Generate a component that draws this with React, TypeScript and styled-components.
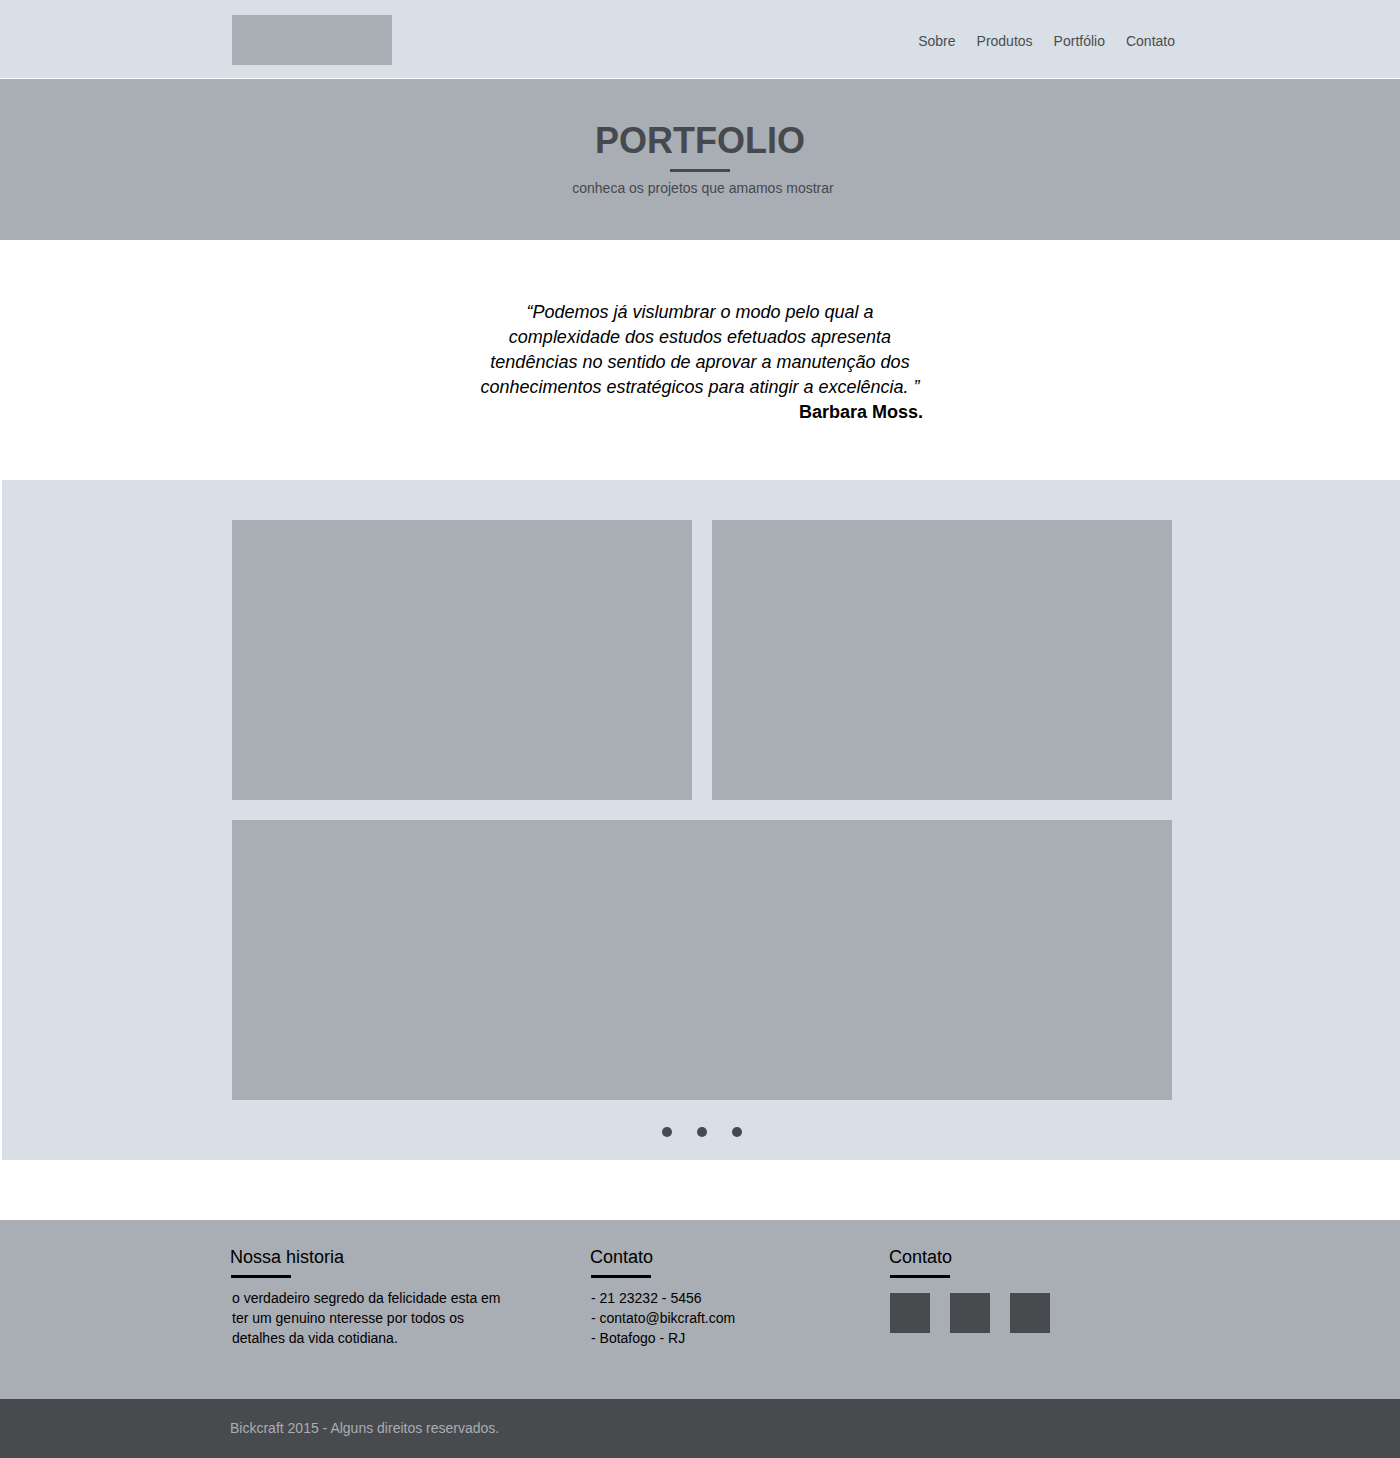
import styled, { createGlobalStyle } from "styled-components";

const GlobalStyle = createGlobalStyle`
    * { box-sizing: border-box; }
    body {
        margin: 0;
        background: #ffffff;
        font-family: "Liberation Sans", Arial, sans-serif;
    }
    ul { list-style: none; margin: 0; padding: 0; }
    a { text-decoration: none; color: inherit; }
    p, h1, h2, h3 { margin: 0; }
`;

const Container = styled.div`
    width: 940px;
    margin: 0 auto;
`;

const Header = styled.header`
    height: 79px;
    background: #d9dfe6;
    border-bottom: 1px solid #ffffff;
`;
const HeaderInner = styled(Container)`
    display: flex;
    justify-content: space-between;
    align-items: flex-start;
`;
const Logo = styled.div`
    width: 160px;
    height: 50px;
    margin: 15px 0 0 2px;
    background: #a9adb4;
`;
const Nav = styled.ul`
    display: flex;
    gap: 21px;
    margin: 32px -5px 0 0;
    li {
        font-size: 14px;
        line-height: 18px;
        color: #4a4d51;
    }
`;

const Hero = styled.section`
    height: 161px;
    padding-top: 41px;
    background: #a9adb4;
    display: flex;
    flex-direction: column;
    align-items: center;
`;
const Title = styled.h1`
    font-size: 36px;
    line-height: 41px;
    font-weight: bold;
    color: #46494d;
`;
const Bar = styled.span<{ $width: number; $color: string }>`
    display: block;
    width: ${p => p.$width}px;
    height: 3px;
    background: ${p => p.$color};
`;
const HeroBar = styled(Bar)`
    margin-top: 8px;
`;
const Subtitle = styled.p`
    margin-top: 8px;
    margin-left: 6px;
    font-size: 14px;
    line-height: 16px;
    color: #46494d;
`;

const QuoteSection = styled.section`
    height: 240px;
    padding-top: 60px;
`;
const Quote = styled.blockquote`
    width: 450px;
    margin: 0 auto;
    font-size: 18px;
    line-height: 25px;
    color: #000;
    p {
        font-style: italic;
        text-align: center;
    }
    cite {
        display: block;
        font-style: normal;
        font-weight: bold;
        text-align: right;
        padding-right: 2px;
    }
`;

const Gallery = styled.section`
    height: 680px;
    margin-left: 2px;
    padding-top: 40px;
    background: #d9dfe6;
`;
const Grid = styled.div`
    width: 940px;
    margin: 0 auto;
    padding-left: 1px;
    display: grid;
    grid-template-columns: 460px 460px;
    grid-auto-rows: 280px;
    gap: 20px;
`;
const Photo = styled.div<{ $wide?: boolean }>`
    background: #a9adb4;
    grid-column: ${p => (p.$wide ? "1 / -1" : "auto")};
`;
const Dots = styled.div`
    display: flex;
    justify-content: center;
    gap: 25px;
    margin-top: 27px;
    padding-left: 1px;
`;
const Dot = styled.span`
    width: 10px;
    height: 10px;
    border-radius: 50%;
    background: #46494d;
`;

const Footer = styled.footer`
    margin-top: 60px;
    height: 179px;
    padding-top: 27px;
    background: #a9adb4;
`;
const FooterGrid = styled(Container)`
    display: grid;
    grid-template-columns: 360px 299px 1fr;
`;
const Column = styled.div``;
const ColumnTitle = styled.h3`
    font-size: 18px;
    line-height: 21px;
    font-weight: normal;
    color: #000;
`;
const TitleBar = styled(Bar)`
    margin: 7px 0 0 1px;
`;
const ColumnText = styled.p`
    margin: 10px 0 0 2px;
    max-width: 280px;
    font-size: 14px;
    line-height: 20px;
    color: #000;
`;
const Contacts = styled.ul`
    margin: 10px 0 0 1px;
    li {
        font-size: 14px;
        line-height: 20px;
        color: #000;
    }
`;
const Socials = styled.ul`
    display: flex;
    gap: 20px;
    margin: 15px 0 0 1px;
`;
const Social = styled.li`
    width: 40px;
    height: 40px;
    background: #484b4e;
`;

const Copy = styled.div`
    height: 59px;
    background: #484b4e;
    p {
        font-size: 14px;
        line-height: 59px;
        color: #a9adb4;
    }
`;

function App()
{
    const menu = ["Sobre", "Produtos", "Portfólio", "Contato"];
    const contacts = ["- 21 23232 - 5456", "- contato@bikcraft.com", "- Botafogo - RJ"];

    return (
        <>
            <GlobalStyle />
            <Header>
                <HeaderInner>
                    <Logo />
                    <Nav>
                        {menu.map(item => (
                            <li key={item}><a href="#">{item}</a></li>
                        ))}
                    </Nav>
                </HeaderInner>
            </Header>

            <Hero>
                <Title>PORTFOLIO</Title>
                <HeroBar $width={60} $color="#46494d" />
                <Subtitle>conheca os projetos que amamos mostrar</Subtitle>
            </Hero>

            <QuoteSection>
                <Quote>
                    <p>“Podemos já vislumbrar o modo pelo qual a complexidade dos estudos efetuados apresenta tendências no sentido de aprovar a manutenção dos conhecimentos estratégicos para atingir a excelência. ”</p>
                    <cite>Barbara Moss.</cite>
                </Quote>
            </QuoteSection>

            <Gallery>
                <Grid>
                    <Photo />
                    <Photo />
                    <Photo $wide />
                </Grid>
                <Dots>
                    <Dot />
                    <Dot />
                    <Dot />
                </Dots>
            </Gallery>

            <Footer>
                <FooterGrid>
                    <Column>
                        <ColumnTitle>Nossa historia</ColumnTitle>
                        <TitleBar $width={60} $color="#000" />
                        <ColumnText>o verdadeiro segredo da felicidade esta em ter um genuino nteresse por todos os detalhes da vida cotidiana.</ColumnText>
                    </Column>
                    <Column>
                        <ColumnTitle>Contato</ColumnTitle>
                        <TitleBar $width={60} $color="#000" />
                        <Contacts>
                            {contacts.map(c => <li key={c}>{c}</li>)}
                        </Contacts>
                    </Column>
                    <Column>
                        <ColumnTitle>Contato</ColumnTitle>
                        <TitleBar $width={60} $color="#000" />
                        <Socials>
                            <Social />
                            <Social />
                            <Social />
                        </Socials>
                    </Column>
                </FooterGrid>
            </Footer>

            <Copy>
                <Container>
                    <p>Bickcraft 2015 - Alguns direitos reservados.</p>
                </Container>
            </Copy>
        </>
    );
}

export default App;
